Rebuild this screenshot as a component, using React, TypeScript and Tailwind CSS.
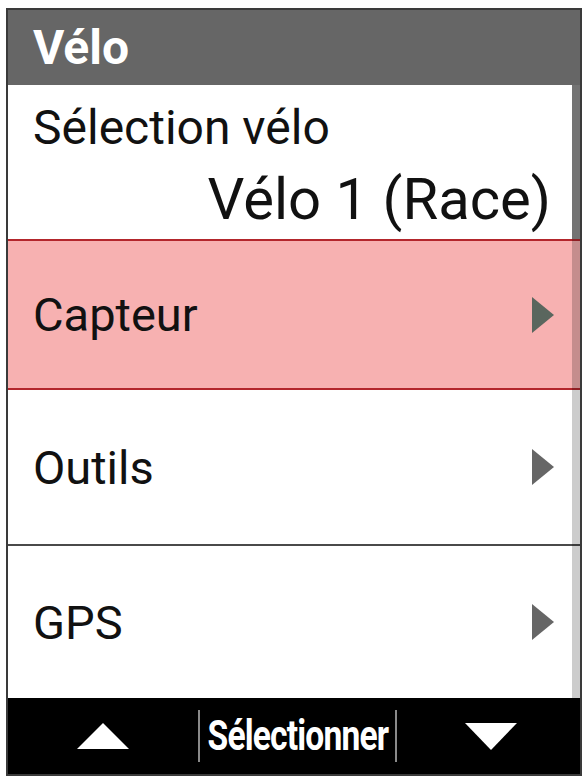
import type { ReactNode } from "react";

const font = { fontFamily: "Roboto, 'Noto Sans', 'Liberation Sans', sans-serif" };

function Chevron({ className = "" }: { className?: string }) {
  return (
    <svg width="22" height="36" viewBox="0 0 22 36" className={className}>
      <polygon points="0,0 22,18 0,36" fill="currentColor" />
    </svg>
  );
}

function MenuRow({
  children,
  className = "",
  arrowTone = "text-[#666]",
}: {
  children: ReactNode;
  className?: string;
  arrowTone?: string;
}) {
  return (
    <div className={`flex items-center justify-between pl-[25px] pr-[26px] ${className}`}>
      <span className="text-[47px] leading-none text-[#111]">{children}</span>
      <Chevron className={arrowTone} />
    </div>
  );
}

export default function App() {
  return (
    <div className="h-[779px] w-[587px] bg-white pl-[6px] pt-[8px]" style={font}>
      <div className="flex h-[768px] w-[576px] flex-col border-2 border-[#3a3a3a]">
        <div className="flex h-[75px] items-center bg-[#666] pl-[25px]">
          <span className="text-[48px] font-bold leading-none text-white">Vélo</span>
        </div>

        <div className="relative flex flex-1 flex-col">
          <div className="flex h-[154px] flex-col pl-[25px] pr-[29px] pt-[19px]">
            <span className="text-[48px] leading-none text-[#111]">Sélection vélo</span>
            <span className="mt-[18px] self-end text-[58px] leading-none text-[#111]">Vélo 1 (Race)</span>
          </div>
          <MenuRow
            className="h-[151px] border-y-2 border-[#b3262c] bg-[#f7b1b1]"
            arrowTone="text-[#5a665e]"
          >
            Capteur
          </MenuRow>
          <MenuRow className="h-[156px] border-b-2 border-[#4a4a4a]">Outils</MenuRow>
          <MenuRow className="flex-1">GPS</MenuRow>

          {/* scroll bar sits over the right edge of the rows */}
          <div className="absolute right-0 top-0 flex h-full w-[8px] flex-col">
            <div className="h-[154px] bg-black/55" />
            <div className="flex-1 bg-black/20" />
          </div>
        </div>

        <div className="flex h-[76px] items-center bg-black">
          <div className="flex w-[190px] justify-center">
            <svg width="52" height="26" viewBox="0 0 52 26">
              <polygon points="26,0 52,26 0,26" fill="white" />
            </svg>
          </div>
          <div className="h-[52px] w-[2px] bg-[#8a8a8a]" />
          <div className="flex w-[195px] justify-center">
            <span className="inline-block scale-x-[0.8] text-[42px] font-bold leading-none tracking-tight text-white">
              Sélectionner
            </span>
          </div>
          <div className="h-[52px] w-[2px] bg-[#8a8a8a]" />
          <div className="flex flex-1 justify-center pl-[4px]">
            <svg width="52" height="27" viewBox="0 0 52 27">
              <polygon points="0,0 52,0 26,27" fill="white" />
            </svg>
          </div>
        </div>
      </div>
    </div>
  );
}
